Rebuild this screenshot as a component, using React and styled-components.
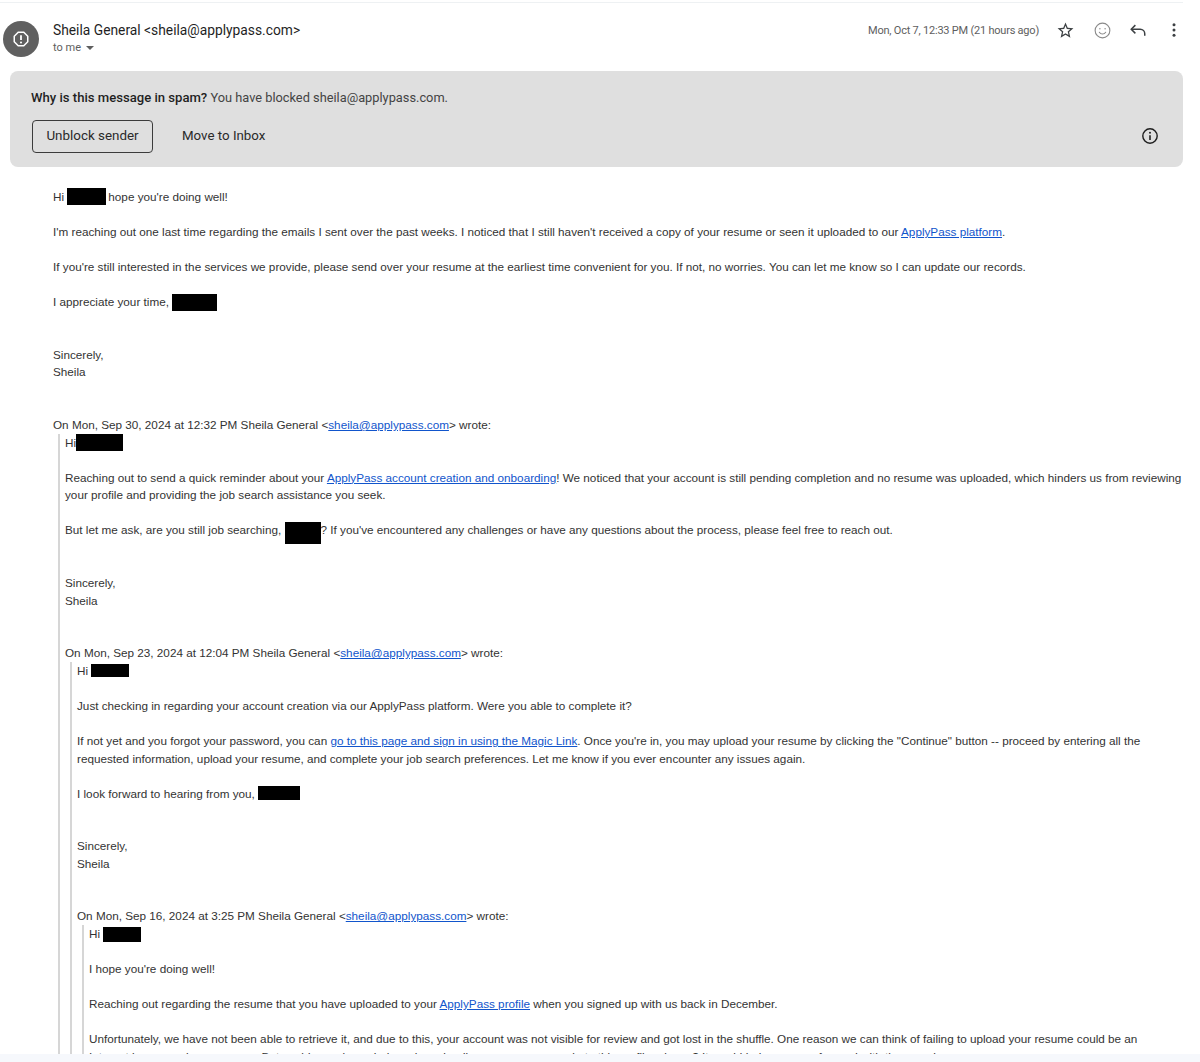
import React from 'react'
import styled, { createGlobalStyle } from 'styled-components'

const Global = createGlobalStyle`
  html, body { margin: 0; padding: 0; background: #f6f8fc; }
  * { box-sizing: border-box; }
`

const Page = styled.div`
  width: 1200px;
  height: 1062px;
  background: #f6f8fc;
  overflow: hidden;
`
const Mail = styled.main`
  height: 1054px;
  background: #fff;
  overflow: hidden;
  padding-top: 2px;
`
const TopRule = styled.div`
  width: 1183px;
  height: 1px;
  background: #eef1f3;
`
const Header = styled.header`
  display: flex;
  align-items: flex-start;
  height: 68px;
  padding: 18px 0 0 3px;
`
const Avatar = styled.div`
  width: 36px;
  height: 36px;
  border-radius: 50%;
  background: #606060;
  display: flex;
  align-items: center;
  justify-content: center;
  flex: none;
`
const Who = styled.div`
  margin-left: 14px;
  font-family: Roboto, sans-serif;
  flex: 1;
`
const Name = styled.div`
  font-size: 13.8px;
  line-height: 18px;
  color: #1f1f1f;
`
const ToMe = styled.div`
  display: flex;
  align-items: center;
  gap: 5px;
  margin-top: 1px;
  font-size: 11px;
  line-height: 16px;
  color: #5e5e5e;
`
const Caret = styled.span`
  width: 0;
  height: 0;
  border-left: 4px solid transparent;
  border-right: 4px solid transparent;
  border-top: 4px solid #5e5e5e;
`
const Meta = styled.div`
  display: flex;
  align-items: center;
  height: 18px;
  font-family: Roboto, sans-serif;
  font-size: 11px;
  letter-spacing: -0.22px;
  color: #5e5e5e;
`
const Stamp = styled.span`
  margin-right: 16px;
`
const IconSlot = styled.span`
  width: 20px;
  height: 20px;
  margin-right: ${p => p.$gap}px;
  display: flex;
  align-items: center;
  justify-content: center;
`
const Banner = styled.section`
  margin-left: 10px;
  width: 1173px;
  height: 96px;
  padding: 18px 21px 0;
  background: #dfdfdf;
  border-radius: 8px;
  font-family: Roboto, sans-serif;
`
const Reason = styled.div`
  font-size: 12.8px;
  line-height: 18px;
  color: #444;
  strong { font-size: 13.1px; font-weight: 500; color: #1f1f1f; }
`
const Actions = styled.div`
  display: flex;
  align-items: center;
  margin-top: 13px;
`
const OutlineButton = styled.button`
  width: 121px;
  height: 33px;
  margin-left: 1px;
  border: 1px solid #3c3c3c;
  border-radius: 4px;
  background: transparent;
  font-family: Roboto, sans-serif;
  font-size: 13.4px;
  color: #2a2a2a;
  padding: 0 0 2px;
`
const TextButton = styled.button`
  margin-left: 29px;
  border: 0;
  background: none;
  padding: 0 0 2px;
  font-family: Roboto, sans-serif;
  font-size: 13.3px;
  color: #2a2a2a;
`
const InfoSlot = styled.span`
  margin-left: auto;
  margin-right: 3px;
  margin-top: -1px;
  display: flex;
`
const Body = styled.article`
  padding: 21px 0 0 53px;
  width: 1184px;
  font-family: 'Liberation Sans', Arial, sans-serif;
  font-size: 11.72px;
  line-height: 17.55px;
  color: #333;
`
const Line = styled.div`
  min-height: 17.55px;
`
const Gap = styled.div`
  height: ${p => p.$lines * 17.55}px;
`
const Quote = styled.blockquote`
  margin: 0 0 0 5px;
  padding-left: 5px;
  border-left: 2px solid #d6d6d6;
`
const Mark = styled.span`
  display: inline-block;
  width: ${p => p.$w}px;
  height: ${p => p.$h || 17}px;
  margin: ${p => -6 - (p.$up || 0)}px ${p => p.$r ?? 2}px ${p => -6 + (p.$up || 0)}px 0;
  background: #000;
  vertical-align: middle;
`
const MailLink = styled.a`
  color: #1155cc;
  text-decoration: underline;
`

const StarIcon = () => (
  <svg width="19" height="19" viewBox="0 0 24 24" fill="#3c4043">
    <path d="M22 9.24l-7.19-.62L12 2 9.19 8.63 2 9.24l5.46 4.73L5.82 21 12 17.27 18.18 21l-1.63-7.03L22 9.24zM12 15.4l-3.76 2.27 1-4.28-3.32-2.88 4.38-.38L12 6.1l1.71 4.04 4.38.38-3.32 2.88 1 4.28L12 15.4z" />
  </svg>
)
const SmileIcon = () => (
  <svg width="19" height="19" viewBox="0 0 24 24" fill="none" stroke="#8a8a8a" strokeWidth="1.4">
    <circle cx="12" cy="12" r="9.3" />
    <circle cx="8.7" cy="9.8" r="0.9" fill="#8a8a8a" stroke="none" />
    <circle cx="15.3" cy="9.8" r="0.9" fill="#8a8a8a" stroke="none" />
    <path d="M8 14.2c1 1.6 2.4 2.3 4 2.3s3-.7 4-2.3" strokeLinecap="round" />
  </svg>
)
const ReplyIcon = () => (
  <svg width="18" height="18" viewBox="0 0 24 24" fill="none" stroke="#3c4043" strokeWidth="2">
    <path d="M8.5 5.5 3 11l5.5 5.5" />
    <path d="M3.5 11H15a6 6 0 0 1 6 6v2.5" />
  </svg>
)
const DotsIcon = () => (
  <svg width="18" height="18" viewBox="0 0 24 24" fill="#3c4043">
    <circle cx="12" cy="5" r="2" />
    <circle cx="12" cy="12" r="2" />
    <circle cx="12" cy="19" r="2" />
  </svg>
)
const InfoIcon = () => (
  <svg width="18" height="18" viewBox="0 0 24 24" fill="none" stroke="#1f1f1f" strokeWidth="1.9">
    <circle cx="12" cy="12" r="9.6" />
    <path d="M12 11v6.2" strokeWidth="2.1" />
    <circle cx="12" cy="7.6" r="1.3" fill="#1f1f1f" stroke="none" />
  </svg>
)
const SpamIcon = () => (
  <svg width="18" height="18" viewBox="0 0 24 24" fill="none" stroke="#fff" strokeWidth="2">
    <path d="M8.3 3h7.4L21 8.3v7.4L15.7 21H8.3L3 15.7V8.3z" />
    <path d="M12 7v6.4" strokeWidth="2.4" />
    <circle cx="12" cy="16.6" r="1.4" fill="#fff" stroke="none" />
  </svg>
)

export default function App() {
  return (
    <Page>
      <Global />
      <Mail>
        <TopRule />
        <Header>
          <Avatar><SpamIcon /></Avatar>
          <Who>
            <Name>Sheila General &lt;sheila@applypass.com&gt;</Name>
            <ToMe>to me <Caret /></ToMe>
          </Who>
          <Meta>
            <Stamp>Mon, Oct 7, 12:33 PM (21 hours ago)</Stamp>
            <IconSlot $gap={17}><StarIcon /></IconSlot>
            <IconSlot $gap={16}><SmileIcon /></IconSlot>
            <IconSlot $gap={16}><ReplyIcon /></IconSlot>
            <IconSlot $gap={16}><DotsIcon /></IconSlot>
          </Meta>
        </Header>
        <Banner>
          <Reason><strong>Why is this message in spam?</strong> You have blocked sheila@applypass.com.</Reason>
          <Actions>
            <OutlineButton>Unblock sender</OutlineButton>
            <TextButton>Move to Inbox</TextButton>
            <InfoSlot><InfoIcon /></InfoSlot>
          </Actions>
        </Banner>
        <Body>
          <Line>Hi <Mark $w={39} $up={1} />hope you're doing well!</Line>
          <Gap $lines={1} />
          <Line>I'm reaching out one last time regarding the emails I sent over the past weeks. I noticed that I still haven't received a copy of your resume or seen it uploaded to our <MailLink>ApplyPass platform</MailLink>.</Line>
          <Gap $lines={1} />
          <Line>If you're still interested in the services we provide, please send over your resume at the earliest time convenient for you. If not, no worries. You can let me know so I can update our records.</Line>
          <Gap $lines={1} />
          <Line>I appreciate your time, <Mark $w={45} $up={1} /></Line>
          <Gap $lines={2} />
          <Line>Sincerely,</Line>
          <Line>Sheila</Line>
          <Gap $lines={2} />
          <Line>On Mon, Sep 30, 2024 at 12:32 PM Sheila General &lt;<MailLink>sheila@applypass.com</MailLink>&gt; wrote:</Line>
          <Quote>
            <Line>Hi<Mark $w={47} $up={1} /></Line>
            <Gap $lines={1} />
            <Line>Reaching out to send a quick reminder about your <MailLink>ApplyPass account creation and onboarding</MailLink>! We noticed that your account is still pending completion and no resume was uploaded, which hinders us from reviewing your profile and providing the job search assistance you seek.</Line>
            <Gap $lines={1} />
            <Line>But let me ask, are you still job searching, <Mark $w={36} $h={22} $r={0} $up={-2} />? If you've encountered any challenges or have any questions about the process, please feel free to reach out.</Line>
            <Gap $lines={2} />
            <Line>Sincerely,</Line>
            <Line>Sheila</Line>
            <Gap $lines={2} />
            <Line>On Mon, Sep 23, 2024 at 12:04 PM Sheila General &lt;<MailLink>sheila@applypass.com</MailLink>&gt; wrote:</Line>
            <Quote>
              <Line>Hi <Mark $w={38} $h={13} $up={1} /></Line>
              <Gap $lines={1} />
              <Line>Just checking in regarding your account creation via our ApplyPass platform. Were you able to complete it?</Line>
              <Gap $lines={1} />
              <Line>If not yet and you forgot your password, you can <MailLink>go to this page and sign in using the Magic Link</MailLink>. Once you're in, you may upload your resume by clicking the "Continue" button -- proceed by entering all the requested information, upload your resume, and complete your job search preferences. Let me know if you ever encounter any issues again.</Line>
              <Gap $lines={1} />
              <Line>I look forward to hearing from you, <Mark $w={42} $h={14} $up={2} /></Line>
              <Gap $lines={2} />
              <Line>Sincerely,</Line>
              <Line>Sheila</Line>
              <Gap $lines={2} />
              <Line>On Mon, Sep 16, 2024 at 3:25 PM Sheila General &lt;<MailLink>sheila@applypass.com</MailLink>&gt; wrote:</Line>
              <Quote>
                <Line>Hi <Mark $w={38} $h={15} /></Line>
                <Gap $lines={1} />
                <Line>I hope you're doing well!</Line>
                <Gap $lines={1} />
                <Line>Reaching out regarding the resume that you have uploaded to your <MailLink>ApplyPass profile</MailLink> when you signed up with us back in December.</Line>
                <Gap $lines={1} />
                <Line>Unfortunately, we have not been able to retrieve it, and due to this, your account was not visible for review and got lost in the shuffle. One reason we can think of failing to upload your resume could be an<br />Internet issue or a browser error. But could you please help us by uploading your resume again to this profile, please? It would help us move forward with the search process.</Line>
              </Quote>
            </Quote>
          </Quote>
        </Body>
      </Mail>
    </Page>
  )
}
